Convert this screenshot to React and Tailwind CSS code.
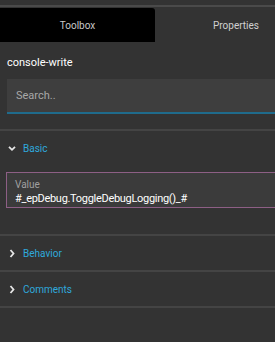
import React from 'react';

const font = { fontFamily: 'Roboto, "Noto Sans", sans-serif' };

function Chevron({ open }) {
  return (
    <svg width="8" height="9" viewBox="0 0 8 9" className="shrink-0">
      {open ? (
        <path d="M1 2.8 L4 5.8 L7 2.8" fill="none" stroke="#e6e6e6" strokeWidth="1.8" />
      ) : (
        <path d="M2.5 1 L5.5 4.5 L2.5 8" fill="none" stroke="#e6e6e6" strokeWidth="1.8" />
      )}
    </svg>
  );
}

function Section({ title, open }) {
  return (
    <div className="h-[34px] flex items-center gap-[7px] pl-[8px] text-[10px] text-[#2fa9dc]">
      <Chevron open={open} />
      <span>{title}</span>
    </div>
  );
}

export default function App() {
  return (
    <div className="w-[275px] h-[342px] bg-[#333333] overflow-hidden" style={font}>
      <div className="h-[5px]" />
      <div className="h-[2px] bg-[#4a4a4a]" />
      <div className="h-px" />
      {/* Tabs */}
      <div className="flex h-[34px] text-[10px]">
        <div className="w-[155px] shrink-0 bg-black rounded-tr-[3px] flex items-center justify-center text-[#c8c8c8]">
          Toolbox
        </div>
        <div className="w-[162px] shrink-0 flex items-center justify-center text-[#d0d0d0]">Properties</div>
      </div>

      <div className="h-[37px] flex items-center pt-[5px] pl-[7px] text-[11px] text-white">console-write</div>

      <div className="ml-[7px] h-[35px] bg-[#3e3e3e] border-b-2 border-[#1f6b8c] flex items-center pt-[2px] pl-[9px] text-[11px] text-[#a8a8a8]">
        Search..
      </div>

      <div className="h-[15px]" />
      <div className="h-[2px] bg-[#444444]" />

      <Section title="Basic" open />

      <div className="h-[7px]" />
      <div className="ml-[6px] h-[36px] bg-[#3b3b3b] border border-r-0 border-[#8d5f85] flex flex-col justify-center pt-[3px] pl-[8px] leading-[14px]">
        <span className="text-[10px] text-[#a0a0a0]">Value</span>
        <span className="text-[11px] tracking-[-0.3px] text-white">#_epDebug.ToggleDebugLogging()_#</span>
      </div>

      <div className="h-[26px]" />
      <div className="h-[2px] bg-[#444444]" />
      <Section title="Behavior" />
      <div className="h-[2px] bg-[#444444]" />
      <Section title="Comments" />
      <div className="h-[2px] bg-[#444444]" />
    </div>
  );
}
